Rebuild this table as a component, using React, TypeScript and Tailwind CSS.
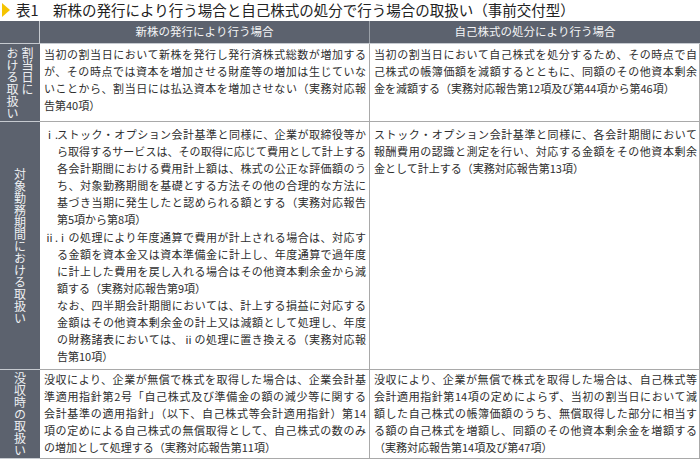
import React from "react";

const Line = ({ children, last }: { children: React.ReactNode; last?: boolean }) => (
  <span
    className={
      last
        ? "block whitespace-nowrap"
        : "block whitespace-nowrap text-justify [text-align-last:justify]"
    }
  >
    {children}
  </span>
);

const Label = ({ children }: { children: React.ReactNode }) => (
  <div className="w-[40px] shrink-0 bg-[#5c626e] border-b border-[#c6cad0] flex items-center justify-center">
    <div className="[writing-mode:vertical-rl] text-[12px] leading-[15px] text-[#eef0f2]">{children}</div>
  </div>
);

export default function App() {
  return (
    <div className="w-[700px] h-[460px] bg-white text-[#2e2e2e] font-['Noto_Sans_CJK_JP',sans-serif] overflow-hidden">
      <div className="h-[21px] flex items-center text-[14.5px] text-[#222] leading-none">
        <svg width="16" height="21" viewBox="0 0 16 21" className="shrink-0">
          <polygon points="2,3 10,10 2,17" fill="#f5c400" />
        </svg>
        <span className="whitespace-nowrap">表1　新株の発行により行う場合と自己株式の処分で行う場合の取扱い（事前交付型）</span>
      </div>

      <div className="flex h-[23px] bg-[#5c626e] text-[11.5px] text-[#f4f5f6] border-b border-[#c6cad0]">
        <div className="w-[40px] shrink-0 border-r border-[#c6cad0]" />
        <div className="w-[330px] shrink-0 border-r border-[#9aa0a8] flex items-center justify-center">新株の発行により行う場合</div>
        <div className="flex-1 flex items-center justify-center">自己株式の処分により行う場合</div>
      </div>

      <div className="flex h-[78px] text-[11px] leading-[17.1px]">
        <Label>
          割当日に
          <br />
          おける取扱い
        </Label>
        <div className="w-[330px] shrink-0 border-r border-b border-[#a9a9a9] pl-[4px] pr-[3px] pt-[2px]">
          <Line>当初の割当日において新株を発行し発行済株式総数が増加する</Line>
          <Line>が、その時点では資本を増加させる財産等の増加は生じていな</Line>
          <Line>いことから、割当日には払込資本を増加させない（実務対応報</Line>
          <Line last>告第40項）</Line>
        </div>
        <div className="flex-1 border-r border-b border-[#a9a9a9] pl-[4px] pr-[2px] pt-[2px]">
          <Line>当初の割当日において自己株式を処分するため、その時点で自</Line>
          <Line>己株式の帳簿価額を減額するとともに、同額のその他資本剰余</Line>
          <Line last>金を減額する（実務対応報告第12項及び第44項から第46項）</Line>
        </div>
      </div>

      <div className="flex h-[248px] text-[11px] leading-[17.1px]">
        <Label>対象勤務期間における取扱い</Label>
        <div className="w-[330px] shrink-0 border-r border-b border-[#a9a9a9] pl-[4px] pr-[3px] pt-[4px]">
          <div className="flex">
            <span className="w-[13px] shrink-0 text-right whitespace-nowrap pr-[1px]">ⅰ.</span>
            <div className="flex-1 min-w-0">
              <Line>ストック・オプション会計基準と同様に、企業が取締役等か</Line>
              <Line>ら取得するサービスは、その取得に応じて費用として計上する</Line>
              <Line>各会計期間における費用計上額は、株式の公正な評価額のう</Line>
              <Line>ち、対象勤務期間を基礎とする方法その他の合理的な方法に</Line>
              <Line>基づき当期に発生したと認められる額とする（実務対応報告</Line>
              <Line last>第5項から第8項）</Line>
            </div>
          </div>
          <div className="flex">
            <span className="w-[13px] shrink-0 whitespace-nowrap">ⅱ.</span>
            <div className="flex-1 min-w-0">
              <Line>ⅰの処理により年度通算で費用が計上される場合は、対応す</Line>
              <Line>る金額を資本金又は資本準備金に計上し、年度通算で過年度</Line>
              <Line>に計上した費用を戻し入れる場合はその他資本剰余金から減</Line>
              <Line last>額する（実務対応報告第9項）</Line>
              <Line>なお、四半期会計期間においては、計上する損益に対応する</Line>
              <Line>金額はその他資本剰余金の計上又は減額として処理し、年度</Line>
              <Line>の財務諸表においては、ⅱの処理に置き換える（実務対応報</Line>
              <Line last>告第10項）</Line>
            </div>
          </div>
        </div>
        <div className="flex-1 border-r border-b border-[#a9a9a9] pl-[4px] pr-[2px] pt-[4px]">
          <Line>ストック・オプション会計基準と同様に、各会計期間において</Line>
          <Line>報酬費用の認識と測定を行い、対応する金額をその他資本剰余</Line>
          <Line last>金として計上する（実務対応報告第13項）</Line>
        </div>
      </div>

      <div className="flex h-[89px] text-[11px] leading-[17.1px]">
        <Label>没収時の取扱い</Label>
        <div className="w-[330px] shrink-0 border-r border-b border-[#a9a9a9] pl-[4px] pr-[3px] pt-[1px]">
          <Line>没収により、企業が無償で株式を取得した場合は、企業会計基</Line>
          <Line>準適用指針第2号「自己株式及び準備金の額の減少等に関する</Line>
          <Line>会計基準の適用指針」（以下、自己株式等会計適用指針）第14</Line>
          <Line>項の定めによる自己株式の無償取得として、自己株式の数のみ</Line>
          <Line last>の増加として処理する（実務対応報告第11項）</Line>
        </div>
        <div className="flex-1 border-r border-b border-[#a9a9a9] pl-[4px] pr-[2px] pt-[1px]">
          <Line>没収により、企業が無償で株式を取得した場合は、自己株式等</Line>
          <Line>会計適用指針第14項の定めによらず、当初の割当日において減</Line>
          <Line>額した自己株式の帳簿価額のうち、無償取得した部分に相当す</Line>
          <Line>る額の自己株式を増額し、同額のその他資本剰余金を増額する</Line>
          <Line last>（実務対応報告第14項及び第47項）</Line>
        </div>
      </div>
    </div>
  );
}
